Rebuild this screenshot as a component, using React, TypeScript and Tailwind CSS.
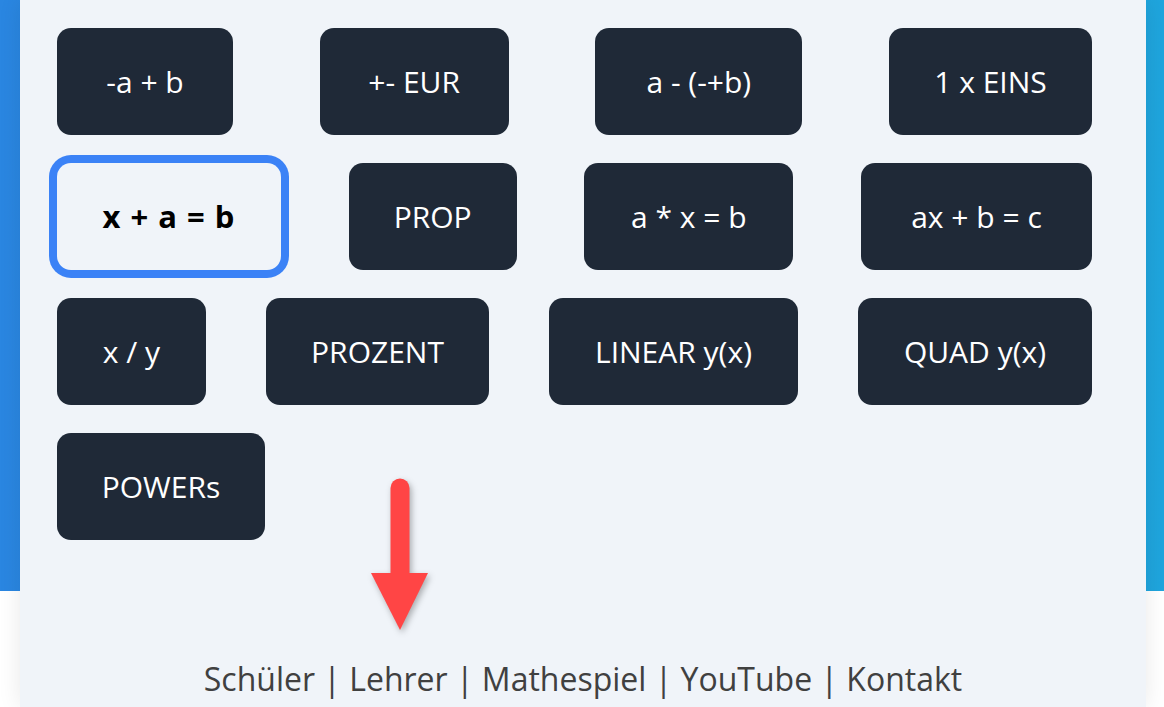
import React from 'react';

type Btn = { label: string; w: string; active?: boolean };

const rows: Btn[][] = [
  [
    { label: '-a + b', w: 'w-[176px]' },
    { label: '+- EUR', w: 'w-[189px]' },
    { label: 'a - (-+b)', w: 'w-[207px]' },
    { label: '1 x EINS', w: 'w-[203px]' },
  ],
  [
    { label: 'x + a = b', w: 'w-[224px]', active: true },
    { label: 'PROP', w: 'w-[168px]' },
    { label: 'a * x = b', w: 'w-[209px]' },
    { label: 'ax + b = c', w: 'w-[231px]' },
  ],
  [
    { label: 'x / y', w: 'w-[149px]' },
    { label: 'PROZENT', w: 'w-[223px]' },
    { label: 'LINEAR y(x)', w: 'w-[249px]' },
    { label: 'QUAD y(x)', w: 'w-[234px]' },
  ],
  [{ label: 'POWERs', w: 'w-[208px]' }],
];

const TopicButton = ({ label, w, active }: Btn) => (
  <button
    className={
      active
        ? `${w} h-[107px] rounded-[14px] bg-[#f0f4f9] text-[31px] font-bold tracking-[1px] text-black ring-[8px] ring-[#3b82f6]`
        : `${w} h-[107px] rounded-[14px] bg-[#1f2937] text-[30px] text-white`
    }
  >
    {label}
  </button>
);

const Arrow = () => (
  <svg
    className="absolute left-[346px] top-[474px] drop-shadow-[2px_3px_3px_rgba(0,0,0,0.3)]"
    width="67"
    height="162"
    viewBox="0 0 67 162"
  >
    <path d="M24.5 14 A9.5 9.5 0 0 1 43.5 14 L43.5 100 L24.5 100 Z" fill="#ff4545" />
    <path d="M5 99 L62 99 L34 156 Z" fill="#ff4545" />
  </svg>
);

export default function App() {
  return (
    <div className="h-[707px] w-[1164px] overflow-hidden bg-white bg-[linear-gradient(90deg,#2a86e1,#1fa5dd)] bg-[length:100%_591px] bg-no-repeat font-['Open_Sans','Noto_Sans',sans-serif]">
      <div className="relative ml-[20px] flex h-full w-[1126px] flex-col bg-[#f0f4f9] shadow-[0_0_22px_rgba(0,0,0,0.09)]">
        <div className="flex flex-col gap-[28px] pl-[37px] pr-[54px] pt-[28px]">
          {rows.map((row, i) => (
            <div key={i} className="flex items-center justify-between">
              {row.map((b) => (
                <TopicButton key={b.label} {...b} />
              ))}
            </div>
          ))}
        </div>
        <Arrow />
        <div className="mt-auto pb-[4px] text-center text-[32px] text-[#404040]">
          Schüler | Lehrer | Mathespiel | YouTube | Kontakt
        </div>
      </div>
    </div>
  );
}
